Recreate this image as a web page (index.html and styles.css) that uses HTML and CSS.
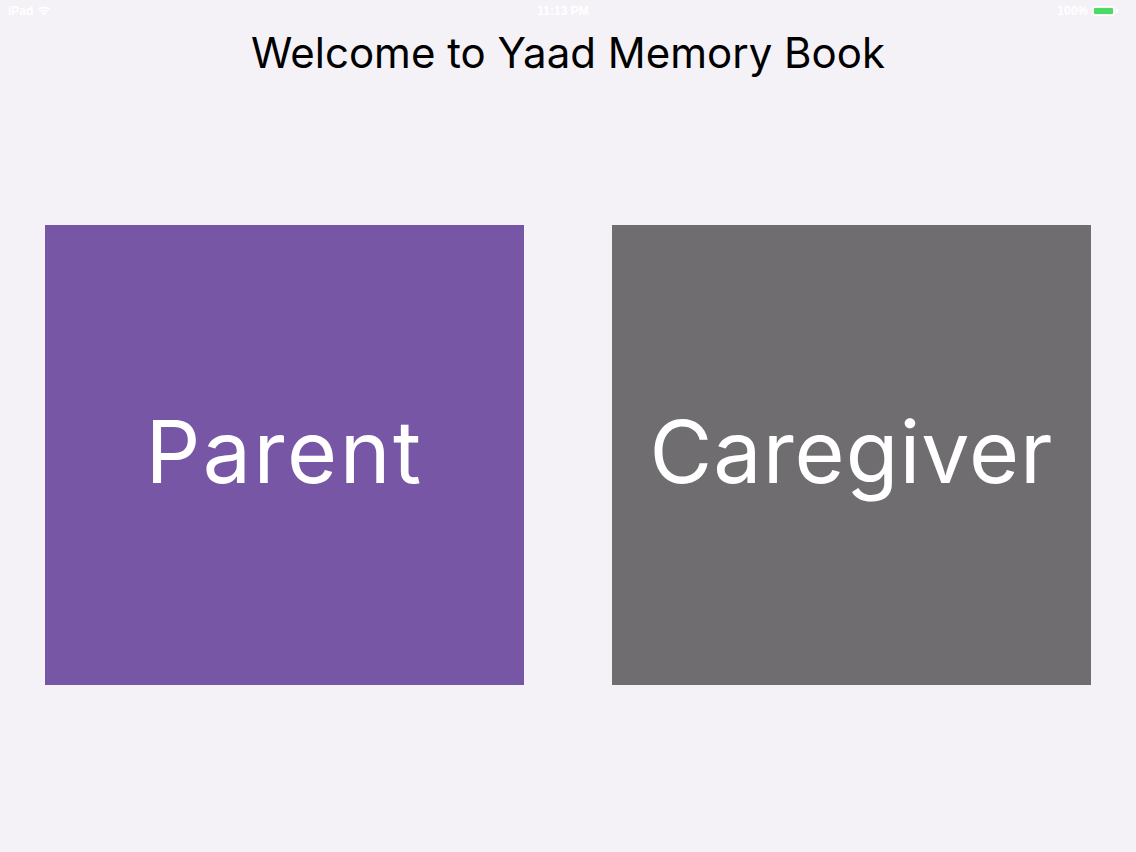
FILE: index.html
```html
<!DOCTYPE html>
<html lang="en">
<head>
<meta charset="utf-8">
<title>Yaad Memory Book</title>
<link rel="stylesheet" href="styles.css">
</head>
<body>
<div class="screen">
  <div class="statusbar">
    <div class="sb-left"><span>iPad</span>
      <svg class="wifi" width="14" height="10" viewBox="0 0 14 10"><path d="M7 9.5 L4.8 7.1 A3.2 3.2 0 0 1 9.2 7.1 Z M2.9 5.1 A6 6 0 0 1 11.1 5.1 L10 6.2 A4.5 4.5 0 0 0 4 6.2 Z M0.9 3.1 A8.8 8.8 0 0 1 13.1 3.1 L12 4.2 A7.3 7.3 0 0 0 2 4.2 Z" fill="#fff"/></svg>
    </div>
    <div class="sb-center">11:13 PM</div>
    <div class="sb-right"><span>100%</span>
      <span class="battery"><span class="battery-fill"></span></span><span class="battery-tip"></span>
    </div>
  </div>
  <h1 class="title">Welcome to Yaad Memory Book</h1>
  <div class="choices">
    <div class="card card-parent">Parent</div>
    <div class="card card-caregiver">Caregiver</div>
  </div>
</div>
</body>
</html>
```
FILE: styles.css
```css
html, body {
  margin: 0;
  padding: 0;
}
body {
  background: #f4f2f6;
  font-family: Inter, "Open Sans", sans-serif;
}
.screen {
  width: 1136px;
  height: 852px;
  display: flex;
  flex-direction: column;
}
.statusbar {
  height: 22px;
  display: flex;
  align-items: center;
  justify-content: space-between;
  padding: 0 8px;
  color: #ffffff;
  font-size: 12px;
  font-weight: 600;
  font-family: "Liberation Sans", sans-serif;
}
.sb-left, .sb-right {
  display: flex;
  align-items: center;
  gap: 4px;
  width: 120px;
}
.sb-right {
  justify-content: flex-end;
  gap: 4px;
  padding-right: 10px;
}
.battery {
  width: 23px;
  height: 10px;
  border: 1px solid #ffffff;
  border-radius: 2px;
  padding: 1px;
  box-sizing: border-box;
  display: flex;
}
.battery-fill {
  flex: 1;
  background: #4cd964;
  border-radius: 1px;
}
.battery-tip {
  width: 2px;
  height: 4px;
  background: #ffffff;
  margin-left: -3px;
}
.title {
  margin: 5px 0 0;
  text-align: center;
  font-weight: 400;
  font-size: 42px;
  line-height: 52px;
  color: #000000;
}
.choices {
  display: flex;
  gap: 88px;
  padding: 0 45px;
  margin-top: 146px;
}
.card {
  width: 479px;
  height: 460px;
  display: flex;
  align-items: center;
  justify-content: center;
  color: #ffffff;
  font-size: 86px;
  letter-spacing: 1px;
  font-weight: 400;
  padding-bottom: 6px;
  box-sizing: border-box;
}
.card-parent {
  background: #7856a6;
  letter-spacing: 2.5px;
}
.card-caregiver {
  background: #6f6d70;
}
```
